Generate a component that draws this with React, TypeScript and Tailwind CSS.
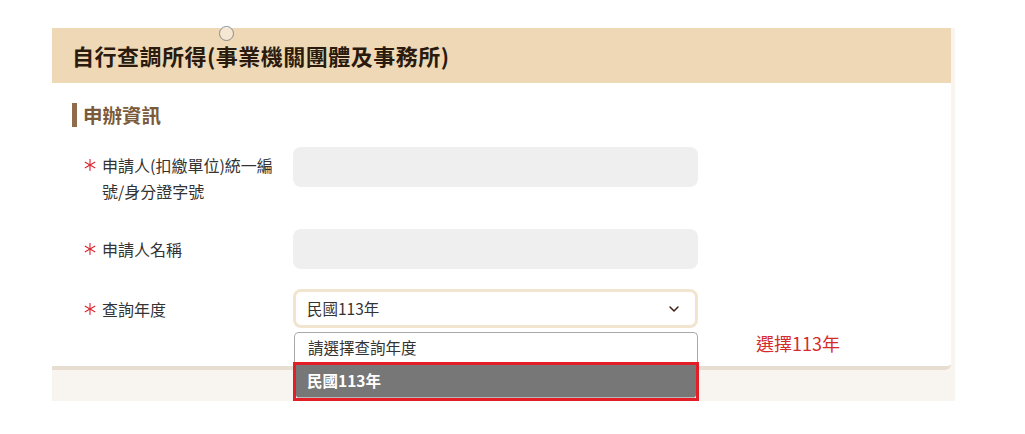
import { ChevronDown } from "lucide-react";

const Star = () => (
    <svg width="12" height="12" viewBox="0 0 12 12" className="shrink-0">
        <g stroke="#d9252e" strokeWidth="1.1" strokeLinecap="round">
            <line x1="6" y1="0.5" x2="6" y2="11.5" />
            <line x1="1.2" y1="3.2" x2="10.8" y2="8.8" />
            <line x1="1.2" y1="8.8" x2="10.8" y2="3.2" />
        </g>
    </svg>
);

const Label: React.FC<{ text: string; className?: string }> = ({ text, className }) => (
    <div className={`w-[209px] shrink-0 flex items-start ${className ?? ""}`}>
        <span className="w-[18px] h-[26px] flex items-center">
            <Star />
        </span>
        <span className="w-[176px] text-[16px] leading-[26px] text-[#333333]">{text}</span>
    </div>
);

const App: React.FC = () => {
    return (
        <div className="w-full h-[434px] bg-white relative font-['Noto_Sans_CJK_TC','Noto_Sans',sans-serif]">
            <div className="absolute left-[219px] top-[26px] w-[15px] h-[15px] rounded-full border border-[#8a8a8a] bg-white/40 z-20" />

            <div className="pt-[28px] pl-[52px]">
                <div className="w-[903px] bg-[#f8f5f0] pb-[31px]">
                    <div className="w-[899px] bg-white border-b-[4px] border-[#e7ddd0] rounded-br-md relative">
                        <div className="h-[55px] bg-[#efd8b5] flex items-center pl-[20px]">
                            <h1 className="text-[22px] font-bold text-[#2a1b0e] tracking-[0.5px]">自行查調所得(事業機關團體及事務所)</h1>
                        </div>

                        <div className="pl-[20px] pt-[20px] pb-[38px]">
                            <div className="flex items-center gap-[6px] h-[24px]">
                                <span className="w-[5px] h-[24px] bg-[#8e6c4c]" />
                                <h2 className="text-[19.5px] font-semibold text-[#7a5a38] leading-none">申辦資訊</h2>
                            </div>

                            <div className="pl-[12px] mt-[20px] flex flex-col">
                                <div className="flex items-start">
                                    <Label text="申請人(扣繳單位)統一編號/身分證字號" className="pt-[5px]" />
                                    <div className="w-[405px] h-10 rounded-lg bg-[#efefef]" />
                                </div>

                                <div className="flex items-start mt-[25px]">
                                    <Label text="申請人名稱" className="pt-[7px]" />
                                    <div className="w-[405px] h-10 rounded-lg bg-[#efefef]" />
                                </div>

                                <div className="flex items-start mt-[20px]">
                                    <Label text="查詢年度" className="pt-[7px]" />
                                    <div className="relative">
                                        <div className="w-[405px] h-[39px] rounded-lg bg-white border-[3px] border-[#f2e5cf] flex items-center justify-between pl-[11px] pr-[13px]">
                                            <span className="text-[15.5px] text-[#333333]">民國113年</span>
                                            <ChevronDown size={16} strokeWidth={2.2} color="#3d1f12" />
                                        </div>

                                        <div className="absolute left-0 top-[43px] w-[406px] z-10">
                                            <div className="mx-[1px] h-[30px] bg-white border border-b-0 border-[#a8a8a8] rounded-t-[5px] flex items-center pl-[13px] text-[15.5px] text-[#333333]">
                                                請選擇查詢年度
                                            </div>
                                            <div className="h-[39px] border-[3px] border-[#e31e26] bg-white">
                                                <div className="h-full bg-[#777777] border-b border-[#b9b9b9] rounded-b-[3px] flex items-center pl-[11px] text-[15.5px] font-bold text-white">
                                                    民國113年
                                                </div>
                                            </div>
                                        </div>
                                    </div>
                                </div>
                            </div>
                        </div>

                        <span className="absolute left-[704px] top-[301px] text-[18px] leading-[28px] text-[#d52b2b]">選擇113年</span>
                    </div>
                </div>
            </div>
        </div>
    );
};

export default App;
